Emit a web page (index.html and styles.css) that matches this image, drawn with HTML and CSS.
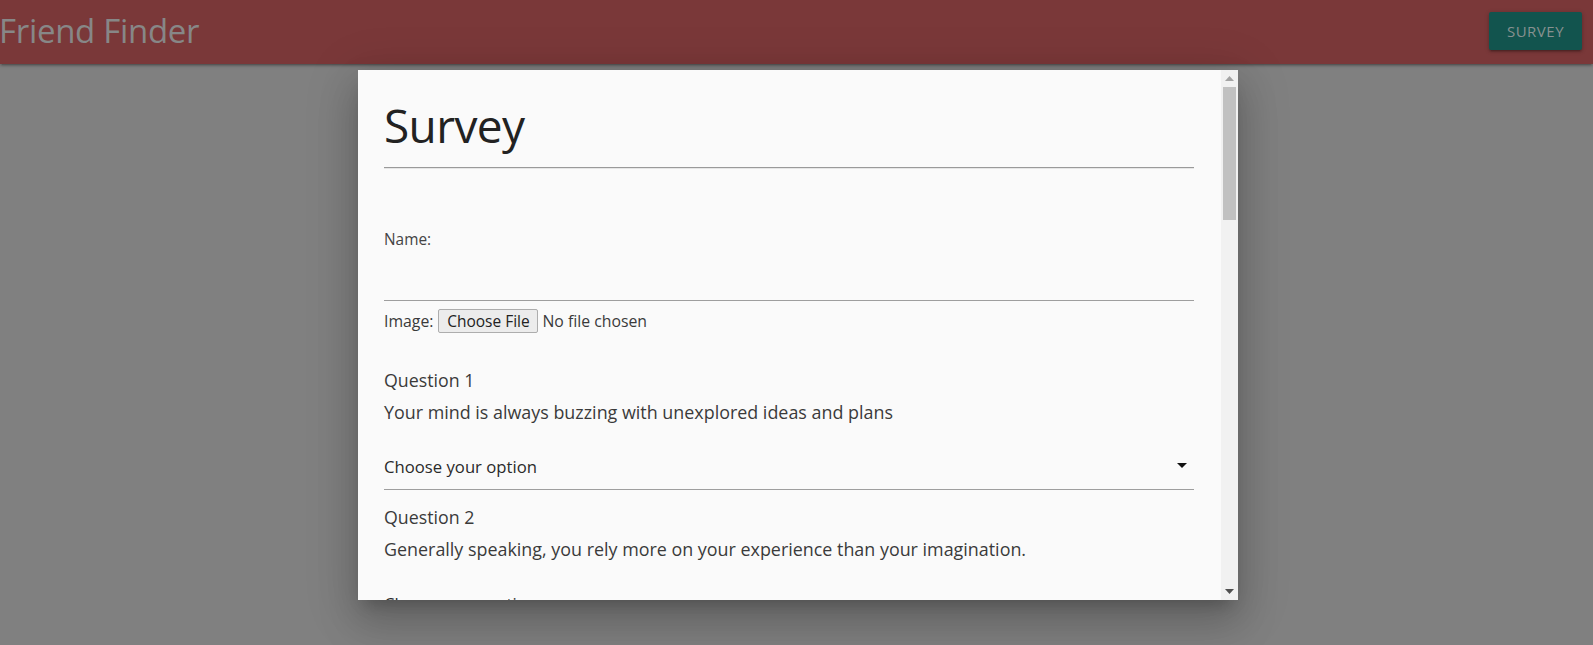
FILE: index.html
```html
<!DOCTYPE html>
<html lang="en">
<head>
<meta charset="utf-8">
<title>Friend Finder</title>
<link rel="stylesheet" href="styles.css">
</head>
<body>
<nav class="navbar">
  <a class="brand" href="#">Friend Finder</a>
  <a class="nav-btn" href="#">SURVEY</a>
</nav>
<main class="page"></main>

<div class="modal">
  <div class="modal-content">
    <h3 class="survey-title">Survey</h3>
    <div class="rule"></div>
    <form class="survey-form">
      <label class="field-label">Name:</label>
      <div class="text-input"></div>
      <div class="image-row">
        <span class="image-label">Image:</span>
        <span class="file-btn">Choose File</span>
        <span class="file-status">No file chosen</span>
      </div>

      <div class="question">
        <div class="q-title">Question 1</div>
        <div class="q-text">Your mind is always buzzing with unexplored ideas and plans</div>
        <div class="select">
          <span class="select-text">Choose your option</span>
          <svg class="caret" width="24" height="24" viewBox="0 0 24 24"><path d="M7 10l5 5 5-5z"/></svg>
        </div>
      </div>

      <div class="question">
        <div class="q-title">Question 2</div>
        <div class="q-text">Generally speaking, you rely more on your experience than your imagination.</div>
        <div class="select">
          <span class="select-text">Choose your option</span>
          <svg class="caret" width="24" height="24" viewBox="0 0 24 24"><path d="M7 10l5 5 5-5z"/></svg>
        </div>
      </div>
    </form>
  </div>
  <div class="scrollbar">
    <div class="sb-btn"><svg width="9" height="5" viewBox="0 0 9 5"><path d="M0 5L4.5 0 9 5z" fill="#a3a3a3"/></svg></div>
    <div class="sb-thumb"></div>
    <div class="sb-track"></div>
    <div class="sb-btn"><svg width="9" height="5" viewBox="0 0 9 5"><path d="M0 0L4.5 5 9 0z" fill="#505050"/></svg></div>
  </div>
</div>
</body>
</html>
```

FILE: styles.css
```css
html, body {
  margin: 0;
  padding: 0;
  height: 100%;
}
body {
  background: #808080;
  font-family: "Open Sans", "Noto Sans", sans-serif;
  overflow: hidden;
}
.navbar {
  height: 64px;
  background: #7a3839;
  display: flex;
  justify-content: space-between;
  align-items: flex-start;
  box-shadow: 0 2px 2px 0 rgba(0,0,0,.14), 0 3px 1px -2px rgba(0,0,0,.12), 0 1px 5px 0 rgba(0,0,0,.2);
  position: relative;
  z-index: 1;
}
.brand {
  color: #878787;
  text-decoration: none;
  font-size: 33px;
  line-height: 62px;
  letter-spacing: -0.3px;
  margin-left: -1px;
}
.nav-btn {
  margin-top: 12px;
  margin-right: 11px;
  width: 93px;
  height: 38px;
  background: #12544e;
  color: #879190;
  text-decoration: none;
  font-size: 15px;
  letter-spacing: .5px;
  display: flex;
  align-items: center;
  justify-content: center;
  border-radius: 2px;
  box-shadow: 0 2px 2px 0 rgba(0,0,0,.14), 0 3px 1px -2px rgba(0,0,0,.12), 0 1px 5px 0 rgba(0,0,0,.2);
}
.modal {
  position: absolute;
  left: 358px;
  top: 70px;
  width: 880px;
  height: 530px;
  background: #fafafa;
  display: flex;
  z-index: 2;
  box-shadow: 0 24px 38px 3px rgba(0,0,0,.14), 0 9px 46px 8px rgba(0,0,0,.12), 0 11px 15px -7px rgba(0,0,0,.2);
}
.modal-content {
  flex: 1;
  overflow: hidden;
  padding: 0 27px 0 26px;
  color: #3a3a3a;
}
.survey-title {
  margin: 27px 0 0;
  font-size: 46px;
  line-height: 56px;
  letter-spacing: -0.6px;
  font-weight: 400;
  color: #222;
}
.rule {
  margin-top: 14px;
  border-top: 1px solid #9a9a9a;
  border-bottom: 1px solid #e6e6e6;
}
.survey-form {
  display: flex;
  flex-direction: column;
}
.field-label {
  margin-top: 61px;
  font-size: 15.4px;
  line-height: 20px;
  color: #444;
}
.text-input {
  margin-top: 5px;
  height: 45px;
  border-bottom: 1px solid #9e9e9e;
}
.image-row {
  margin-top: 8px;
  height: 24px;
  display: flex;
  align-items: center;
  font-size: 15.8px;
  color: #3a3a3a;
}
.file-btn {
  margin-left: 5px;
  width: 98px;
  height: 22px;
  border: 1px solid #adadad;
  background: #ececec;
  border-radius: 2px;
  display: flex;
  align-items: center;
  justify-content: center;
  font-size: 15.5px;
  color: #222;
}
.file-status {
  margin-left: 4px;
}
.question {
  margin-top: 35px;
  display: flex;
  flex-direction: column;
}
.question + .question {
  margin-top: 15px;
}
.q-title {
  font-size: 17.8px;
  line-height: 24px;
  color: #3a3a3a;
}
.q-text {
  margin-top: 8px;
  font-size: 17.9px;
  line-height: 24px;
  color: #3a3a3a;
}
.select {
  margin-top: 20px;
  height: 45px;
  border-bottom: 1px solid #9e9e9e;
  display: flex;
  align-items: center;
  justify-content: space-between;
  font-size: 16.7px;
  color: #2a2a2a;
}
.caret {
  fill: #111;
  margin-top: -3px;
}
.scrollbar {
  width: 17px;
  background: #f1f1f1;
  display: flex;
  flex-direction: column;
}
.sb-btn {
  height: 17px;
  display: flex;
  align-items: center;
  justify-content: center;
}
.sb-thumb {
  height: 133px;
  margin: 0 2px;
  background: #c1c1c1;
}
.sb-track {
  flex: 1;
}
```
